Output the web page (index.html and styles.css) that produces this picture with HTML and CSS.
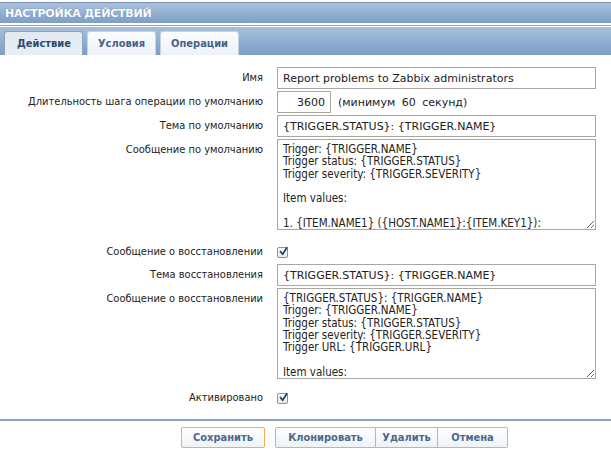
FILE: index.html
```html
<!DOCTYPE html>
<html lang="ru">
<head>
<meta charset="utf-8">
<title>Настройка действий</title>
<link rel="stylesheet" href="styles.css">
</head>
<body>
<div class="page">
  <div class="header"><span class="title">НАСТРОЙКА ДЕЙСТВИЙ</span></div>
  <div class="tabbar">
    <span class="tab active">Действие</span>
    <span class="tab">Условия</span>
    <span class="tab">Операции</span>
  </div>
  <div class="form">
    <label class="lbl">Имя</label>
    <div class="field"><input class="inp" type="text" value="Report problems to Zabbix administrators"></div>

    <label class="lbl">Длительность шага операции по умолчанию</label>
    <div class="field inline"><input class="inp num" type="text" value="3600"><span class="hint">(минимум 60 секунд)</span></div>

    <label class="lbl">Тема по умолчанию</label>
    <div class="field"><input class="inp" type="text" value="{TRIGGER.STATUS}: {TRIGGER.NAME}"></div>

    <label class="lbl">Сообщение по умолчанию</label>
    <div class="field"><textarea class="ta ta1">Trigger: {TRIGGER.NAME}
Trigger status: {TRIGGER.STATUS}
Trigger severity: {TRIGGER.SEVERITY}

Item values:

1. {ITEM.NAME1} ({HOST.NAME1}:{ITEM.KEY1}): {ITEM.VALUE1}
2. {ITEM.NAME2} ({HOST.NAME2}:{ITEM.KEY2}): {ITEM.VALUE2}</textarea></div>

    <label class="lbl cblbl">Сообщение о восстановлении</label>
    <div class="field cbrow"><span class="cb"><svg viewBox="0 0 11 11" width="11" height="11"><path d="M2.5 5.5 L4.6 8.2 L8.8 1.8" fill="none" stroke="#23426e" stroke-width="1.8" stroke-linecap="round" stroke-linejoin="round"/></svg></span></div>

    <label class="lbl">Тема восстановления</label>
    <div class="field"><input class="inp" type="text" value="{TRIGGER.STATUS}: {TRIGGER.NAME}"></div>

    <label class="lbl">Сообщение о восстановлении</label>
    <div class="field"><textarea class="ta ta2">{TRIGGER.STATUS}: {TRIGGER.NAME}
Trigger: {TRIGGER.NAME}
Trigger status: {TRIGGER.STATUS}
Trigger severity: {TRIGGER.SEVERITY}
Trigger URL: {TRIGGER.URL}

Item values:

1. {ITEM.NAME1} ({HOST.NAME1}:{ITEM.KEY1}): {ITEM.VALUE1}</textarea></div>

    <label class="lbl cblbl act">Активировано</label>
    <div class="field cbrow act"><span class="cb"><svg viewBox="0 0 11 11" width="11" height="11"><path d="M2.5 5.5 L4.6 8.2 L8.8 1.8" fill="none" stroke="#23426e" stroke-width="1.8" stroke-linecap="round" stroke-linejoin="round"/></svg></span></div>
  </div>
  <div class="footer">
    <button class="btn primary">Сохранить</button>
    <div class="group">
      <button class="btn b-clone">Клонировать</button>
      <button class="btn b-del">Удалить</button>
      <button class="btn b-cancel">Отмена</button>
    </div>
  </div>
</div>
</body>
</html>
```
FILE: styles.css
```css
html, body {
  margin: 0;
  padding: 0;
  background: #ffffff;
}
.page {
  width: 611px;
  font-family: "DejaVu Sans", Verdana, sans-serif;
  font-size: 11px;
  color: #222;
}
.header {
  margin-top: 2px;
  height: 20px;
  border-top: 1px solid #7a91b1;
  background: linear-gradient(#aac1dc, #7d9ec6);
  display: flex;
  align-items: center;
  padding-left: 5px;
}
.title {
  color: #fff;
  font-weight: bold;
  font-size: 11px;
  letter-spacing: -0.2px;
  text-shadow: 0 0 1px #5a769c;
}
.tabbar {
  margin-top: 1px;
  border-top: 1px solid #8ea3bf;
  height: 30px;
  background: linear-gradient(#a8c0dc 0%, #97b3d3 40%, #7b9dc6 100%);
  box-shadow: inset 0 1px 0 #ffffff;
  display: flex;
  align-items: flex-end;
  gap: 4px;
  padding-left: 4px;
  box-sizing: border-box;
  position: relative;
  top: 1px;
}
.tab {
  height: 24px;
  box-sizing: border-box;
  padding: 0 10px;
  display: flex;
  align-items: center;
  font-family: "DejaVu Sans Condensed", "DejaVu Sans", sans-serif;
  font-stretch: condensed;
  font-size: 11px;
  font-weight: bold;
  color: #456389;
  background: linear-gradient(#fbfcfd, #eef2f7);
  border-radius: 3px 3px 0 0;
  border: 1px solid #c7d3e2;
  border-bottom: none;
}
.tab.active {
  background: linear-gradient(#e3e9f1, #e9eef4);
  color: #2e4a70;
  border-color: #8ea3bf;
  padding: 0 11px 0 12px;
}
.form {
  display: grid;
  grid-template-columns: 263px 319px;
  column-gap: 14px;
  row-gap: 2px;
  padding-top: 13px;
}
.lbl {
  text-align: right;
  padding-top: 4px;
  line-height: 14px;
  white-space: nowrap;
  color: #222;
  font-family: "DejaVu Sans Condensed", "DejaVu Sans", sans-serif;
  font-stretch: condensed;
  font-size: 11px;
}
.field {
  display: flex;
}
.inline {
  align-items: center;
  gap: 7px;
}
.inp {
  width: 319px;
  height: 22px;
  box-sizing: border-box;
  border: 1px solid #aaa79e;
  padding: 0 5px;
  font-family: "DejaVu Sans", Verdana, sans-serif;
  font-size: 11px;
  color: #222;
  background: #fff;
  outline: none;
  margin: 0;
}
.inp.num {
  width: 54px;
  text-align: right;
}
.hint {
  color: #222;
  word-spacing: 3px;
}
.ta {
  width: 319px;
  box-sizing: border-box;
  border: 1px solid #aaa79e;
  padding: 3px 5px 0 5px;
  margin: 0;
  font-family: "DejaVu Sans Condensed", "DejaVu Sans", sans-serif;
  font-stretch: condensed;
  font-size: 11.5px;
  line-height: 12.3px;
  color: #222;
  overflow: hidden;
  resize: both;
  outline: none;
}
.ta1 { height: 91px; }
.ta2 { height: 91px; }
.cblbl {
  padding-top: 13px;
  padding-bottom: 3px;
}
.cbrow {
  align-items: flex-start;
  padding-top: 15px;
}
.cb {
  width: 11px;
  height: 11px;
  box-sizing: border-box;
  border: 1px solid #8e949c;
  border-radius: 2px;
  background: linear-gradient(#fdfdfd, #e8ebee);
  display: flex;
  position: relative;
}
.cb svg {
  position: absolute;
  left: 0;
  top: -2px;
}
.cblbl.act {
  padding-top: 10px;
}
.cbrow.act {
  padding-top: 12px;
}
.footer {
  margin-top: 11px;
  border-top: 2px solid #8ba1bf;
  box-shadow: 0 2px 0 #fff, 0 3px 0 #b3c3d6;
  padding: 6px 0 0 181px;
  display: flex;
  gap: 10px;
}
.group {
  display: flex;
}
.btn {
  height: 21px;
  box-sizing: border-box;
  font-family: "DejaVu Sans Condensed", "DejaVu Sans", sans-serif;
  font-stretch: condensed;
  font-size: 11px;
  font-weight: bold;
  color: #4a6890;
  background: linear-gradient(#ffffff, #eef2f6);
  border: 1px solid #a9b9cd;
  padding: 0;
  margin: 0;
  border-radius: 2px;
  text-align: center;
}
.group .btn {
  border-radius: 0;
}
.group .btn + .btn {
  border-left: none;
}
.group .btn:first-child { border-radius: 2px 0 0 2px; }
.group .btn:last-child { border-radius: 0 2px 2px 0; }
.btn.primary {
  border-color: #eeb04e;
  width: 84px;
}
.b-clone { width: 101px; }
.b-del { width: 62px; }
.b-cancel { width: 70px; }
```
